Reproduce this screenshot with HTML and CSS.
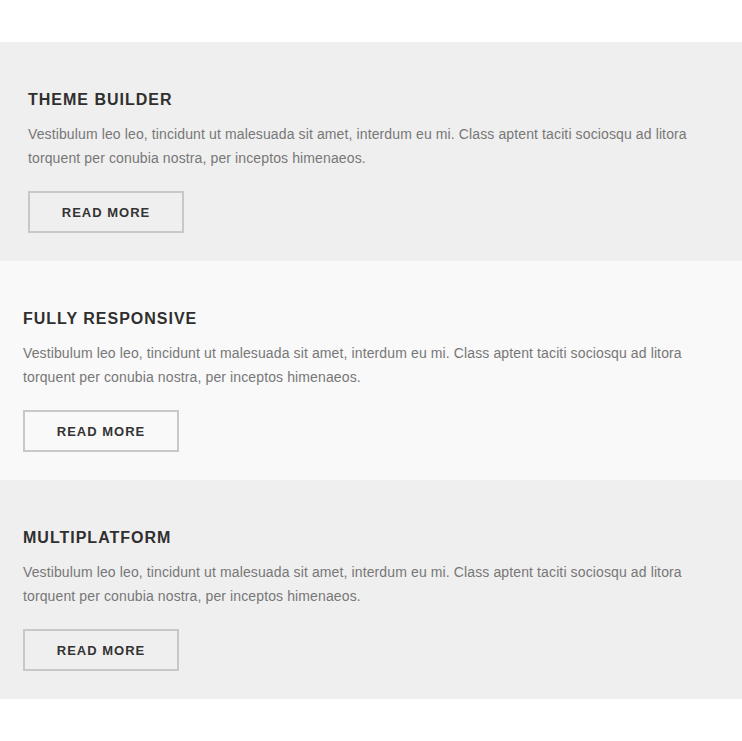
FILE: index.html
```html
<!DOCTYPE html>
<html lang="en">
<head>
  <meta charset="UTF-8" />
  <title>Features</title>
  <link rel="stylesheet" href="styles.css">
</head>
<body>

  <div class="features">
    <div class="feature feature-dark feature-first">
      <h3>Theme Builder</h3>
      <p>Vestibulum leo leo, tincidunt ut malesuada sit amet, interdum eu mi. Class aptent taciti sociosqu ad litora torquent per conubia nostra, per inceptos himenaeos.</p>
      <a class="read-more" href="#">Read More</a>
    </div>

    <div class="feature feature-light">
      <h3>Fully Responsive</h3>
      <p>Vestibulum leo leo, tincidunt ut malesuada sit amet, interdum eu mi. Class aptent taciti sociosqu ad litora torquent per conubia nostra, per inceptos himenaeos.</p>
      <a class="read-more" href="#">Read More</a>
    </div>

    <div class="feature feature-dark">
      <h3>Multiplatform</h3>
      <p>Vestibulum leo leo, tincidunt ut malesuada sit amet, interdum eu mi. Class aptent taciti sociosqu ad litora torquent per conubia nostra, per inceptos himenaeos.</p>
      <a class="read-more" href="#">Read More</a>
    </div>
  </div>

</body>
</html>
```

FILE: styles.css
```css
/* --- Base --- */
html, body {
  margin: 0;
  padding: 0;
}
body {
  font-family: 'Liberation Sans', Arial, sans-serif;
  background: #fff;
  color: #777;
}

/* --- Feature rows --- */
.features {
  padding: 42px 0 43px;
}
.feature {
  padding: 48px 23px 27px;
  height: 219px;
  box-sizing: border-box;
}
.feature-first {
  padding-left: 28px;
}
.feature-dark {
  background: #efefef;
}
.feature-light {
  background: #f9f9f9;
}
.feature h3 {
  margin: 0 0 12px;
  font-size: 16px;
  line-height: 20px;
  font-weight: bold;
  letter-spacing: 1px;
  text-transform: uppercase;
  color: #2f2f2f;
}
.feature p {
  margin: 0 0 21px;
  max-width: 690px;
  font-size: 14px;
  line-height: 24px;
  letter-spacing: 0.12px;
  color: #777;
}

/* --- Button --- */
.read-more {
  display: flex;
  align-items: center;
  justify-content: center;
  width: 156px;
  height: 42px;
  box-sizing: border-box;
  border: 2px solid #c8c8c8;
  font-size: 13px;
  font-weight: bold;
  letter-spacing: 1px;
  text-transform: uppercase;
  text-decoration: none;
  color: #333;
}
```
